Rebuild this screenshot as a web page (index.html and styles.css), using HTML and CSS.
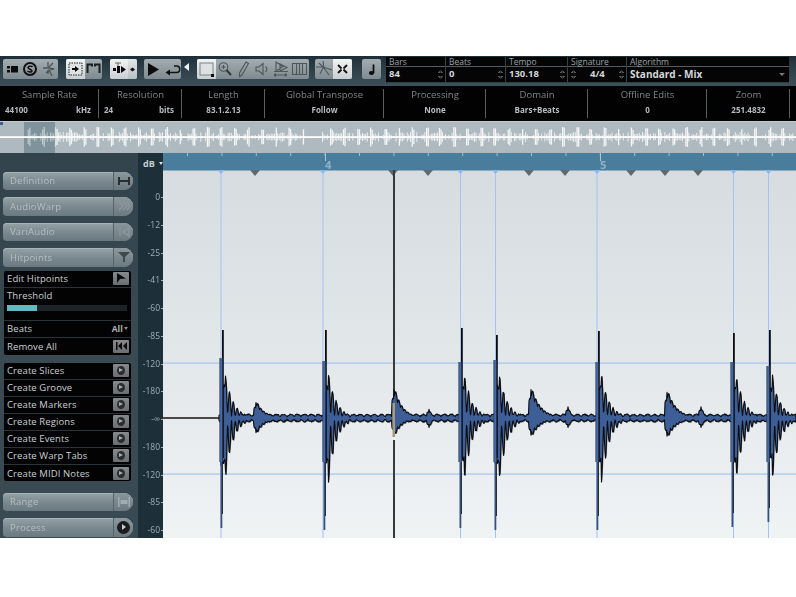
FILE: index.html
```html
<!DOCTYPE html>
<html lang="en">
<head>
<meta charset="utf-8">
<title>Sample Editor</title>
<link rel="stylesheet" href="styles.css">
</head>
<body>
<div class="top-gap"></div>
<div class="app">
  <header class="toolbar">
    <div class="tb-group g1">
      <div class="tb-btn w18"><svg width="18" height="20" viewBox="0 0 18 20"><path class="ic" d="M4 7h3v2.500H4zM4 11h3v2.500H4zM8 7h7v6.500H8z"/></svg></div>
      <div class="tb-btn w18"><svg width="18" height="20" viewBox="0 0 18 20"><circle class="ics" cx="9" cy="10" r="6"/><path class="icl" d="M11.500 8C11 7 7 7 7 8.500S11 10.500 11 12 7.500 13 6.500 12"/></svg></div>
      <div class="tb-btn w19"><svg width="19" height="20" viewBox="0 0 19 20"><path class="icd" d="M9 3v5M14 4l-4 4M4 9h6l5 1-5 1-3 3M10 11l3 6M9 11v4"/></svg></div>
    </div>
    <div class="tb-group g2">
      <div class="tb-btn on w19"><svg width="19" height="20" viewBox="0 0 19 20"><rect class="dash" x="3" y="4" width="13" height="12"/><path class="ic" d="M6 9h3V7l4 3-4 3v-2H6z"/></svg></div>
      <div class="tb-btn w17"><svg width="17" height="20" viewBox="0 0 17 20"><path class="icl2" d="M2.500 14V5.500H7v2M14.500 14V5.500H10v2"/></svg></div>
    </div>
    <div class="tb-group g3">
      <div class="tb-btn on w18"><svg width="18" height="20" viewBox="0 0 18 20"><path class="icd2" d="M5 4h6M8 4v3"/><path class="ic" d="M3 9h3v3H3zM7 7h3v7H7zM11 7l5 3.500-5 3.500z"/></svg></div>
      <div class="tb-btn on2 w9"><svg width="9" height="20" viewBox="0 0 9 20"><path class="ic" d="M2 10.500l2.500-2 2.500 2-2.500 2z"/></svg></div>
    </div>
    <div class="tb-group g4">
      <div class="tb-btn w18"><svg width="18" height="20" viewBox="0 0 18 20"><path class="ic" d="M4 4l11 6.500L4 17z"/></svg></div>
      <div class="tb-btn w19"><svg width="19" height="20" viewBox="0 0 19 20"><path class="icl" d="M12 7h2.500a3.200 3.200 0 0 1 0 6.500H5"/><path class="ic" d="M8 10.500v6L3.500 13.500z"/></svg></div>
    </div>
    <div class="tri-left"></div>
    <div class="tb-group g5">
      <div class="tb-btn on w19"><svg width="19" height="20" viewBox="0 0 19 20"><rect class="sel" x="3" y="4" width="13" height="12"/><path class="ic" d="M14 15h3v3h-3z"/></svg></div>
      <div class="tb-btn w18"><svg width="18" height="20" viewBox="0 0 18 20"><circle class="icm" cx="7.500" cy="8" r="4.300"/><path class="icm" d="M5.500 8h4M7.500 6v4"/><path class="icm3" d="M10.500 11l4.500 5"/></svg></div>
      <div class="tb-btn w19"><svg width="19" height="20" viewBox="0 0 19 20"><path class="icm" d="M12 3l2.500 1.500L8 16l-2.500 1.500L5.500 14z"/></svg></div>
      <div class="tb-btn w18"><svg width="18" height="20" viewBox="0 0 18 20"><path class="icm" d="M3 8h3l4-3.500v11L6 12H3zM12.500 7.500a3.500 3.500 0 0 1 0 5.500"/></svg></div>
      <div class="tb-btn w19"><svg width="19" height="20" viewBox="0 0 19 20"><path class="icm" d="M5 3v9l7-4.500zM9 5v7l7-3.500zM3 12.500h14"/><path class="icm" d="M3 16h13M3 16l2-1.500M3 16l2 1.500M16 16l-2-1.500M16 16l-2 1.500"/></svg></div>
      <div class="tb-btn w19"><svg width="19" height="20" viewBox="0 0 19 20"><path class="icm" d="M2.500 4.500h14v11h-14zM6.500 4.500v11M12.500 4.500v11M9.500 4.500v11"/></svg></div>
    </div>
    <div class="tb-group g6">
      <div class="tb-btn w18"><svg width="18" height="20" viewBox="0 0 18 20"><path class="icm" d="M8 2l1 7 5 7M1 8h7l9 3M4 4l5 5M8 9l-3 6"/></svg></div>
      <div class="tb-btn on w19"><svg width="19" height="20" viewBox="0 0 19 20"><path class="icb" d="M5 6l3.500 3.500M5 14l3.500-3.500M14 6l-3.500 3.500M14 14l-3.500-3.500"/></svg></div>
    </div>
    <div class="tb-group g7">
      <div class="tb-btn w19"><svg width="19" height="20" viewBox="0 0 19 20"><path class="icb" d="M11.500 5.500v8.500"/><ellipse class="ic" cx="9.500" cy="14" rx="2.600" ry="1.900"/></svg></div>
    </div>
    <div class="fields">
      <div class="field f-bars"><span class="f-label">Bars</span><span class="f-value">84<i class="spin"></i></span></div>
      <div class="field f-beats"><span class="f-label">Beats</span><span class="f-value">0<i class="spin"></i></span></div>
      <div class="field f-tempo"><span class="f-label">Tempo</span><span class="f-value">130.18<i class="spin"></i></span></div>
      <div class="field f-sig"><span class="f-label">Signature</span><span class="f-value sig"><i class="spin spin-left"></i>4/4<i class="spin"></i></span></div>
      <div class="field f-algo"><span class="f-label">Algorithm</span><span class="f-value algo">Standard - Mix<i class="caret"></i></span></div>
    </div>
  </header>

  <section class="info">
    <div class="cell c1"><span class="i-label">Sample Rate</span><div class="i-value split"><span>44100</span><span>kHz</span></div></div>
    <div class="cell c2"><span class="i-label">Resolution</span><div class="i-value split"><span>24</span><span>bits</span></div></div>
    <div class="cell c3"><span class="i-label">Length</span><div class="i-value">83.1.2.13</div></div>
    <div class="cell c4"><span class="i-label">Global Transpose</span><div class="i-value">Follow</div></div>
    <div class="cell c5"><span class="i-label">Processing</span><div class="i-value">None</div></div>
    <div class="cell c6"><span class="i-label">Domain</span><div class="i-value">Bars+Beats</div></div>
    <div class="cell c7"><span class="i-label">Offline Edits</span><div class="i-value">0</div></div>
    <div class="cell c8"><span class="i-label">Zoom</span><div class="i-value">251.4832</div></div>
  </section>

  <section class="overview">
    <svg id="overview" class="ov-svg" width="796" height="31" viewBox="0 122 796 31"></svg>
  </section>

  <main class="editor">
    <aside class="side">
      <div class="pill"><span>Definition</span><b class="pill-end"><svg width="18" height="18" viewBox="0 0 18 18"><path class="ic-p" d="M3 5h2v8H3zM13 5h2v8h-2zM5 8h8v2H5z"/></svg></b></div>
      <div class="pill"><span>AudioWarp</span><b class="pill-end"><svg width="18" height="18" viewBox="0 0 18 18"><path class="ic-f" d="M4 5l4 4-4 4M8 5l4 4-4 4M12 5l3 4-3 4"/></svg></b></div>
      <div class="pill"><span>VariAudio</span><b class="pill-end"><svg width="18" height="18" viewBox="0 0 18 18"><path class="ic-f" d="M5 5v8M14 5L8 9l6 4z"/></svg></b></div>
      <div class="pill"><span>Hitpoints</span><b class="pill-end"><svg width="18" height="18" viewBox="0 0 18 18"><path class="ic-g" d="M3 4h12L10 9v5H8V9z"/></svg></b></div>
      <div class="panel p-hit">
        <div class="row"><span>Edit Hitpoints</span><i class="act"><svg width="16" height="12" viewBox="0 0 16 12"><path class="ic" d="M4 1l9 5.500-6 .5-3 4z"/></svg></i></div>
        <div class="row thresh"><span>Threshold</span><div class="track"><div class="fill"></div></div></div>
        <div class="row"><span>Beats</span><b class="all">All<i class="mini-caret"></i></b></div>
        <div class="row"><span>Remove All</span><i class="act"><svg width="16" height="12" viewBox="0 0 16 12"><path class="ic" d="M3 2h1.500v8H3zM9 2v8L5 6zM14 2v8l-4-4z"/></svg></i></div>
      </div>
      <div class="panel p-create">
        <div class="row"><span>Create Slices</span><i class="act play"></i></div>
        <div class="row"><span>Create Groove</span><i class="act play"></i></div>
        <div class="row"><span>Create Markers</span><i class="act play"></i></div>
        <div class="row"><span>Create Regions</span><i class="act play"></i></div>
        <div class="row"><span>Create Events</span><i class="act play"></i></div>
        <div class="row"><span>Create Warp Tabs</span><i class="act play"></i></div>
        <div class="row"><span>Create MIDI Notes</span><i class="act play"></i></div>
      </div>
      <div class="pill pill-range"><span>Range</span><b class="pill-end"><svg width="18" height="18" viewBox="0 0 18 18"><path class="ic-f2" d="M3 4v10h1.500V4zM13.500 4v10H15V4zM5.500 7h7v4h-7z"/></svg></b></div>
      <div class="pill pill-process"><span>Process</span><b class="pill-end"><i class="round-play"></i></b></div>
    </aside>

    <div class="scale">
      <div class="scale-head"><span>dB</span><i class="mini-caret wht"></i></div>
      <div class="scale-rows">
        <span class="tick">0</span><span class="tick">-12</span><span class="tick">-25</span><span class="tick">-41</span><span class="tick">-60</span><span class="tick">-85</span><span class="tick">-120</span><span class="tick">-180</span><span class="tick">-∞</span><span class="tick">-180</span><span class="tick">-120</span><span class="tick">-85</span><span class="tick">-60</span>
      </div>
    </div>

    <div class="canvas">
      <svg id="wave" class="wave-svg" width="633" height="385" viewBox="163 153 633 385">
        <defs>
          <linearGradient id="bg" x1="0" y1="0" x2="0" y2="1">
            <stop offset="0" stop-color="#d6dce0"/>
            <stop offset="0.5" stop-color="#e2e7ea"/>
            <stop offset="1" stop-color="#f0f3f4"/>
          </linearGradient>
        </defs>
        <rect x="163" y="170" width="633" height="368" fill="url(#bg)"/>
        <rect x="163" y="153" width="633" height="17.500" class="ruler"/>
        <g id="rulerTicks"></g>
        <text x="325" y="169" class="bar-no">4</text>
        <text x="600" y="169" class="bar-no">5</text>
        <g id="grid"></g>
        <g id="waveLayer"></g>
      </svg>
    </div>
  </main>
</div>
<script src="wave.js"></script>
</body>
</html>
```

FILE: styles.css
```css
* { box-sizing: border-box; }
html, body { margin: 0; padding: 0; background: #fff; }
body { width: 796px; height: 597px; overflow: hidden; font-family: "Open Sans", "Liberation Sans", sans-serif; }
.top-gap { height: 56px; }
.app { width: 796px; height: 482px; display: flex; flex-direction: column; filter: blur(0.45px); }

/* toolbar */
.toolbar { height: 30px; display: flex; align-items: flex-start; padding: 3px 0 0 3px; background: linear-gradient(#1f2f38, #2c3e48 40%, #3d505a); }
.tb-group { display: flex; height: 20px; border-radius: 2px; overflow: hidden; background: linear-gradient(#a3adb1, #7f8b90); }
.tb-btn { height: 20px; display: flex; }
.tb-btn svg { display: block; }
.tb-btn.on { background: linear-gradient(#f2f4f4, #c9cfd2); }
.tb-btn.on2 { background: linear-gradient(#e2e6e7, #b8bfc3); }
.w9 { width: 9px; } .w17 { width: 17px; } .w18 { width: 18px; } .w19 { width: 19px; }
.g2 { margin-left: 8px; } .g3 { margin-left: 8px; } .g4 { margin-left: 7px; }
.g5 { margin-left: 8px; } .g6 { margin-left: 6px; } .g7 { margin-left: 10px; }
.tri-left { width: 0; height: 0; margin: 4px 0 0 3px; border: 4px solid transparent; border-left-width: 0; border-right: 5px solid #eef1f2; }
.ic { fill: #0c0c0c; }
.ics { fill: none; stroke: #111; stroke-width: 2; }
.icl { fill: none; stroke: #111; stroke-width: 1.500; }
.icl2 { fill: none; stroke: #1b1f22; stroke-width: 2; }
.icd { fill: none; stroke: #4d5559; stroke-width: 1.300; }
.icd2 { fill: none; stroke: #666; stroke-width: 1; }
.dash { fill: #dfe3e4; stroke: #222; stroke-dasharray: 1.500 1; }
.sel { fill: #dde1e3; stroke: #8a9297; stroke-width: 1.200; }
.icm { fill: none; stroke: #4e565a; stroke-width: 1.100; }
.icm3 { fill: none; stroke: #333a3e; stroke-width: 2.200; }
.icb { fill: none; stroke: #111; stroke-width: 1.800; }

.fields { display: flex; margin-left: 5px; margin-top: -2px; width: 403px; height: 26px; background: #050505; border-bottom: 1px solid #30414a; }
.field { display: flex; flex-direction: column; border-left: 1px solid #3a3f42; }
.field:first-child { border-left: 0; }
.f-bars { width: 59px; } .f-beats { width: 60px; } .f-tempo { width: 62px; } .f-sig { width: 59px; } .f-algo { width: 163px; }
.f-label { height: 10px; padding-left: 3px; font-size: 8.500px; line-height: 9px; color: #9aa2a6; border-bottom: 1px solid #555b5f; white-space: nowrap; }
.f-value { position: relative; flex: 1; padding-left: 3px; font-size: 9.500px; line-height: 14px; font-weight: 700; color: #d4d8da; white-space: nowrap; }
.f-value.sig { padding-left: 22px; }
.f-value.algo { font-size: 10px; padding-left: 3px; }
.spin { position: absolute; right: 2px; top: 3px; width: 5px; height: 9px; background:
  linear-gradient(135deg, transparent 50%, #555 50%) 0 0 / 2.500px 3px no-repeat,
  linear-gradient(225deg, transparent 50%, #555 50%) 2.500px 0 / 2.500px 3px no-repeat,
  linear-gradient(45deg, transparent 50%, #555 50%) 0 6px / 2.500px 3px no-repeat,
  linear-gradient(-45deg, transparent 50%, #555 50%) 2.500px 6px / 2.500px 3px no-repeat; }
.spin-left { right: auto; left: 3px; }
.caret { position: absolute; right: 4px; top: 6px; border: 3px solid transparent; border-top-color: #777; border-bottom: 0; }

/* info bar */
.info { height: 36px; display: flex; background: #020202; border-bottom: 1px solid #c4ccd0; }
.cell { position: relative; display: flex; flex-direction: column; align-items: center; padding-top: 2px; }
.cell::after { content: ""; position: absolute; right: 0; top: 3px; bottom: 3px; width: 1px; background: #5a5f62; }
.c1 { width: 99px; } .c2 { width: 83px; } .c3 { width: 83px; } .c4 { width: 119px; } .c5 { width: 102px; } .c6 { width: 102px; } .c7 { width: 119px; } .c8 { width: 83px; }
.c8 { flex: none; }
.i-label { font-size: 9.500px; line-height: 14px; color: #7f8689; white-space: nowrap; }
.i-value { font-size: 8px; line-height: 14px; margin-top: 1px; font-weight: 700; color: #b7bdc0; white-space: nowrap; }
.split { align-self: stretch; display: flex; justify-content: space-between; padding: 0 8px 0 5px; }

/* overview */
.overview { height: 31px; background: #aebac0; }
.ov-svg { display: block; }

/* editor */
.editor { flex: 1; min-height: 0; display: flex; }
.side { width: 138px; background: linear-gradient(#33434c, #3a4a53 50%, #3a4a53); padding: 18.500px 0 0 3px; display: flex; flex-direction: column; }
.pill { flex: none; width: 130px; height: 18.500px; display: flex; align-items: center; justify-content: space-between; margin-bottom: 7px; padding-left: 7px; border-radius: 4px 9px 9px 4px; background: linear-gradient(#95a2a8, #77858c 60%, #6b7a82); box-shadow: inset 0 1px 0 #a9b4b9; overflow: hidden; }
.pill span { font-size: 9.500px; color: #b4bfc4; letter-spacing: .2px; }
.pill-end { width: 20px; height: 19px; display: flex; align-items: center; justify-content: center; border-left: 1px solid #56636a; background: linear-gradient(#8c989e, #6c7980); }
.ic-p { fill: #2a2f32; }
.ic-f { fill: none; stroke: #8c979c; stroke-width: 1.500; }
.ic-f2 { fill: #a2adb2; }
.ic-g { fill: #3e484d; }
.round-play { position: relative; display: block; width: 13px; height: 13px; border-radius: 50%; background: #1a1c1e; }
.round-play::after { content: ""; position: absolute; left: 5px; top: 3.500px; border: 3px solid transparent; border-left: 4px solid #c8cdd0; border-right: 0; }

.panel { flex: none; margin-left: 1px; width: 127px; background: #030303; border-radius: 2px; }
.p-hit { margin-top: -3px; margin-bottom: 8px; height: 84px; }
.p-create { height: 118px; margin-bottom: 12px; }
.row { height: 17px; display: flex; align-items: center; justify-content: space-between; padding: 0 2px 0 3px; border-bottom: 1px solid #2a3338; font-size: 9.500px; letter-spacing: .1px; color: #c9d0d3; white-space: nowrap; }
.row:last-child { border-bottom: 0; }
.row.thresh { height: 33px; display: block; padding-top: 1px; }
.row.thresh span { display: block; line-height: 14px; }
.track { height: 6px; margin: 2px 2px 0 0; background: #1d2327; }
.fill { width: 30px; height: 6px; background: #62b9c1; }
.act { width: 16px; height: 13px; display: flex; background: linear-gradient(#858a8c, #6a6e70); border-radius: 1px; position: relative; }
.act.play::after { content: ""; position: absolute; left: 4px; top: 2px; width: 8px; height: 9px; border-radius: 50%; background: #2a2d2f; }
.act.play::before { content: ""; position: absolute; z-index: 1; left: 6px; top: 4px; border: 2.500px solid transparent; border-left: 4px solid #a9aeb0; border-right: 0; }
.all { font-size: 8.500px; color: #aab1b4; display: flex; align-items: center; padding-right: 1px; }
.mini-caret { display: inline-block; margin-left: 1px; border: 2.500px solid transparent; border-top: 3px solid #8a9194; border-bottom: 0; }
.mini-caret.wht { border-top-color: #dfe4e6; margin-left: 4px; }
.pill-range { margin-bottom: 7px; }
.pill-process { margin-bottom: 0; }

/* dB scale */
.scale { width: 25px; background: #1d2f38; }
.scale-head { height: 17px; display: flex; align-items: center; padding: 3px 0 0 5px; font-size: 9px; font-weight: 700; color: #c3ccd0; }
.scale-rows { padding-top: 13px; display: grid; grid-auto-rows: 27.750px; }
.tick { position: relative; display: block; text-align: right; padding-right: 3px; font-size: 8.500px; line-height: 28px; color: #a2afb4; white-space: nowrap; }
.tick::after { content: ""; position: absolute; right: 0; top: 14px; width: 2px; height: 1px; background: #a2afb4; }
.canvas { flex: 1; min-width: 0; }
.wave-svg { display: block; }
.ruler { fill: #4a7d9c; }
.bar-no { font: 700 11px "Open Sans", sans-serif; fill: #8fb0c4; }
```

FILE: wave.js
```js
(function () {
  var NS = "http://www.w3.org/2000/svg";
  var seed = 77;
  function rnd() { seed = (seed * 16807) % 2147483647; return seed / 2147483647; }
  function el(parent, name, attrs) {
    var n = document.createElementNS(NS, name);
    for (var k in attrs) n.setAttribute(k, attrs[k]);
    parent.appendChild(n);
    return n;
  }

  /* ruler */
  var ticks = document.getElementById("rulerTicks");
  for (var t = 0; t < 19; t++) {
    var tx = 187 + t * 34.4;
    el(ticks, "rect", { x: tx, y: 153, width: 1, height: 3, fill: "#9fc0d2" });
  }
  [325, 600].forEach(function (x) {
    el(ticks, "rect", { x: x, y: 153, width: 1, height: 8, fill: "#a9c6d6" });
  });

  /* grid, hitpoints, markers */
  var big = [
    { x: 222, up: 88, dn: 110, body: 60, ring: 32 },
    { x: 325, up: 88, dn: 112, body: 57, ring: 34 },
    { x: 461, up: 90, dn: 110, body: 56, ring: 32 },
    { x: 496, up: 83, dn: 112, body: 58, ring: 33 },
    { x: 598, up: 87, dn: 112, body: 56, ring: 34 },
    { x: 733, up: 85, dn: 109, body: 56, ring: 32 },
    { x: 769, up: 88, dn: 104, body: 52, ring: 32 }
  ];
  var small = [
    { x: 255, a: 18, b: 17, tau: 8 },
    { x: 393, a: 33, b: 19, tau: 8 },
    { x: 530, a: 33, b: 20, tau: 9 },
    { x: 666, a: 30, b: 21, tau: 9 },
    { x: 428, a: 10, b: 11, tau: 3 },
    { x: 567, a: 13, b: 11, tau: 3 },
    { x: 700, a: 13, b: 11, tau: 3 }
  ];
  var grid = document.getElementById("grid");
  [363, 474].forEach(function (y) {
    el(grid, "rect", { x: 163, y: y - 0.5, width: 633, height: 1.2, fill: "#a6c4ee" });
  });
  [220.5, 322.5, 460, 495, 596.5, 733, 768].forEach(function (x) {
    el(grid, "rect", { x: x, y: 170, width: 1, height: 368, fill: "#a4c3f2" });
    el(grid, "path", { d: "M" + (x - 3) + " 170h7l-3.500 4z", fill: "#8fb6ee" });
  });
  [255, 393, 428, 529, 565, 631, 665, 698].forEach(function (x) {
    el(grid, "path", { d: "M" + (x - 5) + " 170h10l-5 6z", fill: "#5f6a70" });
  });

  /* waveform envelope */
  var CY = 418, X0 = 219, X1 = 796;
  var top = [], bot = [];
  for (var x = X0; x <= X1; x += 0.5) {
    var base = 1 + 2 * Math.abs(Math.sin(x * Math.PI / 7));
    var up = base + rnd() * 1.2, dn = base + rnd() * 1.2;
    big.forEach(function (h) {
      var d = x - h.x;
      if (d < -1 || d > 60) return;
      var lobe = 0.1 + 0.9 * Math.pow(Math.abs(Math.cos(d * Math.PI / 3.8)), 1.4);
      var e = d < 3.5 ? h.body * 0.55 : h.ring * Math.exp(-(d - 6) / 8) * lobe;
      up = Math.max(up, e * (0.9 + rnd() * 0.15));
      dn = Math.max(dn, e * (1 + rnd() * 0.15) * 1.25);
    });
    small.forEach(function (s) {
      var d = x - s.x;
      if (d < -1 || d > 38) return;
      var lobe = 0.72 + 0.28 * Math.abs(Math.cos(d * Math.PI / 3));
      var env = d < 1 ? 0.6 : Math.exp(-(d - 1) / s.tau);
      up = Math.max(up, s.a * env * lobe);
      dn = Math.max(dn, s.b * env * lobe);
    });
    top.push([x, CY - up]);
    bot.push([x, CY + dn]);
  }
  var pts = top.concat(bot.reverse());
  var d = "M" + pts.map(function (p) { return p[0] + " " + p[1].toFixed(1); }).join("L") + "Z";
  var w = document.getElementById("waveLayer");

  el(w, "rect", { x: 163, y: 417.2, width: 57, height: 1.6, fill: "#222" });
  el(w, "rect", { x: 393, y: 170, width: 2, height: 368, fill: "#39393a" });
  el(w, "rect", { x: 392.5, y: 437, width: 3, height: 3, fill: "#eef1f2" });
  el(w, "path", { d: d, fill: "#7c7f84", transform: "translate(.8 1)" });
  el(w, "path", { d: d, fill: "#3d5e96", stroke: "#0b0c10", "stroke-width": 1.1, "stroke-linejoin": "round" });
  el(w, "rect", { x: 392.5, y: 403, width: 2.5, height: 34, fill: "#a89a7a" });

  big.forEach(function (h) {
    var x = h.x;
    /* thin tail below */
    el(w, "rect", { x: x - 1.5, y: CY, width: 1.8, height: h.dn, fill: "#34507f" });
    el(w, "rect", { x: x, y: CY + 30, width: 0.9, height: h.dn - 44, fill: "#1c1f26" });
    /* upper and lower dark spike */
    el(w, "rect", { x: x, y: CY - h.up, width: 1.8, height: h.up + 40, fill: "#0c0c10" });
    /* solid body */
    el(w, "rect", { x: x - 2, y: CY - h.body, width: 2.4, height: h.body + 44, fill: "#4169ad" });
    el(w, "rect", { x: x - 2.6, y: CY - h.body, width: 0.8, height: h.body + 44, fill: "#3b4150" });
  });

  /* overview */
  var ov = document.getElementById("overview");
  el(ov, "rect", { x: 24, y: 122, width: 31, height: 31, fill: "#7f939d" });
  el(ov, "rect", { x: 0, y: 122, width: 3, height: 3, fill: "#3f5f94" });
  el(ov, "rect", { x: 0, y: 136.2, width: 796, height: 1.8, fill: "#fff" });
  for (var ox = 26; ox < 794; ox += 1.6) {
    if (ox > 303 && ox < 322) continue;
    var phase = ox % 13.7;
    var hit = phase < 3;
    var amp = hit ? 7 + rnd() * 3 : 1.5 + rnd() * 3.5;
    if (!hit && rnd() < 0.3) continue;
    el(ov, "rect", {
      x: ox.toFixed(1), y: (137 - amp).toFixed(1), width: hit ? 1.3 : 0.9, height: (amp * 2).toFixed(1),
      fill: "#fff", "fill-opacity": ox < 55 ? 0.5 : 0.85
    });
  }
})();
```
